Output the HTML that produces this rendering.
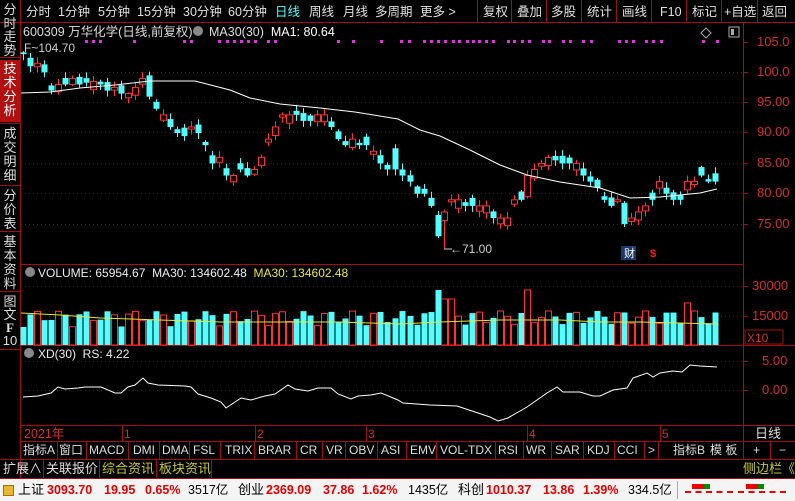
<!DOCTYPE html>
<html><head><meta charset="utf-8">
<style>
*{margin:0;padding:0;box-sizing:border-box}
body{width:795px;height:501px;background:#000;overflow:hidden;position:relative;font-family:"Liberation Sans","Noto Sans CJK SC",sans-serif;font-size:12px;color:#ddd}
.a{position:absolute;white-space:nowrap;line-height:14px}
#tb{position:absolute;left:0;top:0;width:795px;height:23px;border-bottom:1px solid #a01010}
#tb span{position:absolute;top:5px;font-size:12.5px;line-height:14px;color:#e0e0e0}
.vt{position:absolute;left:0;width:20px;font-size:13px;line-height:14px;text-align:center;color:#ddd;border-bottom:1px solid #a01010}
.ib span{position:absolute;top:0;height:18px;line-height:18px;font-size:12px;color:#ddd}
.sb span{position:absolute;top:0}
.sb b{color:#e00000}
</style></head><body>
<div id="tb">
<span style="left:26px">分时</span><span style="left:58px">1分钟</span><span style="left:98px">5分钟</span><span style="left:137px">15分钟</span><span style="left:183px">30分钟</span><span style="left:228px">60分钟</span><span style="left:275px;color:#5ff">日线</span><span style="left:309px">周线</span><span style="left:343px">月线</span><span style="left:375px">多周期</span><span style="left:420px">更多 &gt;</span>
<span style="left:483px">复权</span><span style="left:517px">叠加</span><span style="left:551px">多股</span><span style="left:587px">统计</span><span style="left:622px">画线</span><span style="left:660px">F10</span><span style="left:692px">标记</span><span style="left:724px">+自选</span><span style="left:762px">返回</span>
</div>
<svg class="a" style="left:0;top:0" width="795" height="501">
<g stroke="#a01010" stroke-width="1">
<line x1="20.5" y1="0" x2="20.5" y2="479"/>
<line x1="477.5" y1="0" x2="477.5" y2="22"/><line x1="511.5" y1="0" x2="511.5" y2="22"/><line x1="546.5" y1="0" x2="546.5" y2="22"/><line x1="581.5" y1="0" x2="581.5" y2="22"/><line x1="616.5" y1="0" x2="616.5" y2="22"/><line x1="651.5" y1="0" x2="651.5" y2="22"/><line x1="686.5" y1="0" x2="686.5" y2="22"/><line x1="721.5" y1="0" x2="721.5" y2="22"/><line x1="757.5" y1="0" x2="757.5" y2="22"/>
<line x1="743.5" y1="23" x2="743.5" y2="441"/>
<line x1="21" y1="264.5" x2="743" y2="264.5"/>
<line x1="21" y1="345.5" x2="795" y2="345.5"/>
<line x1="21" y1="425.5" x2="795" y2="425.5"/>
<line x1="21" y1="441.5" x2="795" y2="441.5"/>
<line x1="0" y1="459.5" x2="795" y2="459.5"/>
<line x1="0" y1="478.5" x2="795" y2="478.5"/>
<line x1="122.5" y1="426" x2="122.5" y2="441"/><line x1="255.5" y1="426" x2="255.5" y2="441"/><line x1="366.5" y1="426" x2="366.5" y2="441"/><line x1="527.5" y1="426" x2="527.5" y2="441"/><line x1="660.5" y1="426" x2="660.5" y2="441"/>
<g id="ibl"></g>
</g>
<g stroke="#701010" stroke-dasharray="1,3">
<line x1="21" y1="72.5" x2="743" y2="72.5"/><line x1="21" y1="102.5" x2="743" y2="102.5"/><line x1="21" y1="132.5" x2="743" y2="132.5"/><line x1="21" y1="163.5" x2="743" y2="163.5"/><line x1="21" y1="193.5" x2="743" y2="193.5"/><line x1="21" y1="224.5" x2="743" y2="224.5"/>
<line x1="21" y1="286.5" x2="743" y2="286.5"/><line x1="21" y1="316.5" x2="743" y2="316.5"/><line x1="21" y1="361.5" x2="743" y2="361.5"/><line x1="21" y1="390.5" x2="743" y2="390.5"/>
</g>
<g stroke="#a01010"><line x1="743" y1="42.5" x2="748" y2="42.5"/><line x1="743" y1="72.5" x2="748" y2="72.5"/><line x1="743" y1="102.5" x2="748" y2="102.5"/><line x1="743" y1="132.5" x2="748" y2="132.5"/><line x1="743" y1="163.5" x2="748" y2="163.5"/><line x1="743" y1="193.5" x2="748" y2="193.5"/><line x1="743" y1="224.5" x2="748" y2="224.5"/><line x1="743" y1="286.5" x2="748" y2="286.5"/><line x1="743" y1="316.5" x2="748" y2="316.5"/><line x1="743" y1="361.5" x2="748" y2="361.5"/><line x1="743" y1="390.5" x2="748" y2="390.5"/></g>
<rect x="0" y="60" width="20" height="62" fill="#b01010"/>
<g fill="#e030e0" id="dots"></g>
<g id="cdl"></g>
<polyline fill="none" stroke="#fff" stroke-width="1" points="21,93 50,92 80,88 115,85 150,81 195,81 230,90 250,98 280,104 320,108 355,112 398,119 420,130 440,136 470,150 500,165 527,175 560,182 600,188 630,198 660,197 700,193 717,189"/>
<polyline fill="none" stroke="#fff" stroke-width="1" points="23,397 38,396 51,393 58,387 65,389 78,388 85,387 101,387 115,393 121,393 128,387 135,385 143,378 148,383 158,385 185,386 191,387 198,394 211,398 221,402 226,408 241,398 251,400 265,396 275,394 288,385 295,389 308,391 318,388 331,388 338,394 351,399 358,396 371,395 381,393 398,400 403,403 430,405 457,406 475,412 490,417 498,421 508,418 513,415 527,407 547,393 557,387 563,392 580,392 593,396 600,396 613,390 627,388 633,378 647,373 653,377 660,373 673,371 682,372 690,365 700,366 717,367"/>
<polyline fill="none" stroke="#e8e830" stroke-width="1" points="21,313 60,315 100,318 160,320 220,322 280,322 340,322 400,324 440,322 500,320 560,320 600,322 640,322 680,323 717,324"/>
<rect x="745" y="330" width="38" height="14" fill="none" stroke="#a01010"/>
<path d="M706 28l5 5-5 5-5-5z" fill="none" stroke="#aaa"/>
<rect x="729" y="27" width="10" height="10" fill="none" stroke="#aaa"/><rect x="731" y="29" width="3" height="6" fill="#aaa"/>
<circle cx="30" cy="272" r="5" fill="#888"/><circle cx="29" cy="353" r="5" fill="#888"/>
<circle cx="198" cy="31" r="5" fill="#888"/>
<line x1="444" y1="249" x2="452" y2="249" stroke="#ccc"/>
<rect x="621" y="246" width="15" height="14" fill="#1a3a6a"/>
</svg>
<div class="a" style="left:23px;top:25px;font-size:12.5px;color:#ddd">600309 万华化学(日线,前复权)</div>
<div class="a" style="left:209px;top:25px;font-size:12.5px;color:#ddd">MA30(30)&nbsp; <span style="color:#fff">MA1: 80.64</span></div>
<div class="a" style="left:24px;top:41px;color:#ccc">F~104.70</div>
<div class="a" style="left:450px;top:242px;color:#ccc">←71.00</div>
<div class="a" style="left:624px;top:247px;color:#fff;font-size:11px">财</div>
<div class="a" style="left:650px;top:247px;color:#f22;font-size:11px;font-weight:bold">$</div>
<div class="a" style="left:38px;top:266px;color:#eee">VOLUME: 65954.67&nbsp; MA30: 134602.48&nbsp; <span style="color:#e8e830">MA30: 134602.48</span></div>
<div class="a" style="left:38px;top:347px;color:#eee">XD(30)&nbsp; RS: 4.22</div>
<div class="a" style="left:757px;top:35px;color:#d03030;font-size:13px">105.0</div>
<div class="a" style="left:757px;top:65px;color:#d03030;font-size:13px">100.0</div>
<div class="a" style="left:757px;top:95px;color:#d03030;font-size:13px">95.00</div>
<div class="a" style="left:757px;top:125px;color:#d03030;font-size:13px">90.00</div>
<div class="a" style="left:757px;top:156px;color:#d03030;font-size:13px">85.00</div>
<div class="a" style="left:757px;top:186px;color:#d03030;font-size:13px">80.00</div>
<div class="a" style="left:757px;top:217px;color:#d03030;font-size:13px">75.00</div>
<div class="a" style="left:752px;top:279px;color:#d03030;font-size:13px">30000</div>
<div class="a" style="left:752px;top:309px;color:#d03030;font-size:13px">15000</div>
<div class="a" style="left:747px;top:331px;color:#d03030;font-size:12px">X10</div>
<div class="a" style="left:762px;top:354px;color:#d03030;font-size:13px">5.00</div>
<div class="a" style="left:762px;top:383px;color:#d03030;font-size:13px">0.00</div>
<div class="a" style="left:24px;top:427px;color:#d03030;font-size:12.5px">2021年</div>
<div class="a" style="left:124px;top:427px;color:#d03030">1</div>
<div class="a" style="left:257px;top:427px;color:#d03030">2</div>
<div class="a" style="left:368px;top:427px;color:#d03030">3</div>
<div class="a" style="left:529px;top:427px;color:#d03030">4</div>
<div class="a" style="left:662px;top:427px;color:#d03030">5</div>
<div class="a" style="left:755px;top:427px;color:#ddd;font-size:13px">日线</div>
<div class="vt" style="top:1px;height:57px;padding-top:2px;line-height:13.5px">分时走势</div>
<div class="vt" style="top:62px;height:62px;color:#fff">技术分析</div>
<div class="vt" style="top:124px;height:62px;padding-top:3px">成交明细</div>
<div class="vt" style="top:186px;height:46px;padding-top:3px">分价表</div>
<div class="vt" style="top:232px;height:60px;padding-top:3px">基本资料</div>
<div class="vt" style="top:292px;height:58px;padding-top:3px;line-height:13px">图文<b style="font-family:'Liberation Serif'">F</b><br>10</div>
<div class="a ib" style="left:0;top:441px;width:795px;height:18px" id="ib"></div>
<div class="a" style="left:0;top:460px;width:795px;height:18px;font-size:13px;line-height:18px">
<span class="a" style="left:3px;top:2px">扩展∧</span><span class="a" style="left:46px;top:2px">关联报价</span><span class="a" style="left:102px;top:2px;color:#c8c830">综合资讯</span><span class="a" style="left:159px;top:2px;color:#c8c830">板块资讯</span><span class="a" style="left:743px;top:2px;color:#c8c830">侧边栏《</span>
</div>
<svg class="a" style="left:0;top:459px" width="795" height="20"><g stroke="#a01010"><line x1="43.5" y1="0" x2="43.5" y2="19"/><line x1="99.5" y1="0" x2="99.5" y2="19"/><line x1="156.5" y1="0" x2="156.5" y2="19"/><line x1="211.5" y1="0" x2="211.5" y2="19"/></g></svg>
<div class="a sb" style="left:0;top:479px;width:795px;height:22px;background:#f4f4f4;font-size:12.5px;color:#000;line-height:22px">
<span style="left:3px;top:6px;width:11px;height:11px;background:#e8b830;border:1px solid #a07010"></span>
<span style="left:18px;font-size:13px">上证</span><span style="left:47px"><b>3093.70</b></span><span style="left:104px"><b>19.95</b></span><span style="left:145px"><b>0.65%</b></span><span style="left:188px">3517亿</span>
<span style="left:238px;font-size:13px">创业</span><span style="left:266px"><b>2369.09</b></span><span style="left:323px"><b>37.86</b></span><span style="left:362px"><b>1.62%</b></span><span style="left:408px">1435亿</span>
<span style="left:458px;font-size:13px">科创</span><span style="left:486px"><b>1010.37</b></span><span style="left:543px"><b>13.86</b></span><span style="left:583px"><b>1.39%</b></span><span style="left:628px">334.5亿</span>
<span style="left:677px;top:2px;width:117px;height:18px;background:#f4f4f4;border-left:1px solid #aaa"></span>
<span style="left:692px;top:5px;width:12px;height:5px;background:#e00"></span><span style="left:704px;top:5px;width:6px;height:5px;background:#080"></span>
<span style="left:746px;top:5px;width:12px;height:5px;background:#e00"></span><span style="left:758px;top:5px;width:6px;height:5px;background:#080"></span>
<span style="left:685px;top:12px;width:48px;height:4px;border-top:2px dashed #e00"></span>
<span style="left:738px;top:12px;width:48px;height:4px;border-top:2px dashed #e00"></span>
</div>
<script>
var C=[[23,103,0],[30,101,0],[37,101.5,1],[44,100,0],[51,97,0],[58,98,1],[65,98,0],[72,99,1],[79,98,0],[86,98.3,0],[93,98.5,1],[100,98,0],[107,97,0],[114,97.5,1],[121,96.5,0],[128,96.5,1],[135,97.5,1],[142,99,1],[149,96,0],[156,94,0],[163,93,1],[170,91,0],[177,90,0],[184,89.5,0],[191,91,1],[198,90,0],[205,88,0],[212,85,0],[219,86,1],[226,83,0],[233,83,1],[240,84,0],[247,83,0],[254,84,1],[261,86,1],[268,89,1],[275,91,1],[282,93,1],[289,93,1],[296,93,0],[303,92,0],[310,92,0],[317,93,1],[324,93,1],[331,91,0],[338,89,0],[345,88,0],[352,89,1],[359,88,0],[366,88,0],[373,87,1],[380,85,0],[387,84,0],[395,84,0],[402,83,0],[410,82,0],[417,80,0],[424,80,0],[431,78,0],[438,73,0],[444,77,1],[451,79,1],[458,79,1],[465,78,0],[472,78,0],[479,78,1],[486,78,1],[493,76,0],[500,76,1],[507,76,1],[514,79,1],[521,79,0],[527,83,1],[534,84,1],[541,85,1],[548,86,1],[555,85.5,0],[562,85,0],[569,85,0],[576,85,1],[583,83,0],[590,82,0],[597,81,0],[604,79,0],[611,78,0],[617,79,1],[624,75,0],[631,76,1],[638,77,1],[645,78,1],[652,79,0],[659,82,1],[666,80,0],[673,79,0],[680,79,0],[687,82,1],[694,82,1],[701,83,0],[708,82,0],[715,82,0]];
function Y(p){return 42+(105-p)*6.07}
var s='';
for(var i=0;i<C.length;i++){var x=C[i][0],c=C[i][1],up=C[i][2];var d=0.3+Math.abs(Math.sin(i*1.7))*1.1;if(x==438||x==527||x==624||x==149||x==395)d=3.5;var o=up?c-d:c+d;
var hi=Math.max(o,c)+0.2+Math.abs(Math.sin(i*2.3))*0.8,lo=Math.min(o,c)-0.2-Math.abs(Math.cos(i*2.9))*0.8;if(x==444)lo=71;
var col=up?'#ff3232':'#54ffff';var t=Y(Math.max(o,c)),b=Y(Math.min(o,c));if(b-t<1)b=t+1;
s+='<line x1="'+(x+0.5)+'" y1="'+Y(hi)+'" x2="'+(x+0.5)+'" y2="'+Y(lo)+'" stroke="'+col+'"/>';
s+=up?'<rect x="'+(x-2.5)+'" y="'+t+'" width="6" height="'+(b-t)+'" fill="#000" stroke="'+col+'"/>':'<rect x="'+(x-2.5)+'" y="'+t+'" width="6" height="'+(b-t)+'" fill="'+col+'"/>';
var v=18+Math.abs(Math.sin(i*0.9))*16;if(x==438||x==527)v=55;if(x==444||x==451)v=46;if(x==687)v=42;var vy=345-v;
s+=up?'<rect x="'+(x-2.5)+'" y="'+vy+'" width="6" height="'+(345-vy)+'" fill="#000" stroke="#ff3232"/>':'<rect x="'+(x-2.5)+'" y="'+vy+'" width="6" height="'+(345-vy)+'" fill="#54ffff"/>';}
document.getElementById('cdl').innerHTML=s;
var dx=[85,92,99,133,183,190,218,226,233,240,247,254,267,274,337,352,380,400,408,423,430,437,444,452,458,466,472,478,485,492,507,513,521,528,542,548,562,569,582,590,618,625,632,645,652,660,702,716],dd='';
for(var j=0;j<dx.length;j++)dd+='<rect x="'+dx[j]+'" y="40" width="3" height="3"/>';
document.getElementById('dots').innerHTML=dd;
var it=[['指标A',23],['窗口',59],['MACD',89],['DMI',133],['DMA',162],['FSL',193],['TRIX',225],['BRAR',258],['CR',300],['VR',326],['OBV',349],['ASI',381],['EMV',410],['VOL-TDX',440],['RSI',498],['WR',526],['SAR',555],['KDJ',587],['CCI',617],['>',648],['指标B',673],['模 板',710],['+',753],['−',779]],h='',l='';
var sep=[57,86,128,159,189,220,254,296,322,345,377,406,436,495,523,551,583,614,644,658,743,770];
for(var k=0;k<it.length;k++)h+='<span style="left:'+it[k][1]+'px">'+it[k][0]+'</span>';
document.getElementById('ib').innerHTML=h;
for(var m=0;m<sep.length;m++)l+='<line x1="'+(sep[m]+0.5)+'" y1="442" x2="'+(sep[m]+0.5)+'" y2="459"/>';
document.getElementById('ibl').innerHTML=l;
</script>
</body></html>
